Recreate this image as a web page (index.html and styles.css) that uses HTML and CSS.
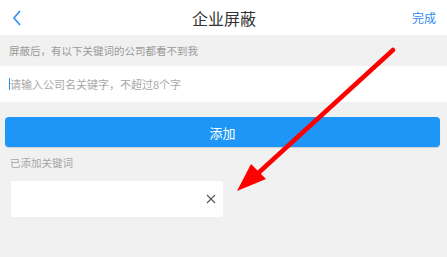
FILE: index.html
```html
<!DOCTYPE html>
<html lang="zh">
<head>
  <meta charset="UTF-8" />
  <meta name="viewport" content="width=device-width, initial-scale=1.0" />
  <title>企业屏蔽</title>
  <link rel="stylesheet" href="styles.css">
</head>
<body>
  <nav class="topbar">
    <a href="#" class="back">
      <svg width="10" height="16" viewBox="0 0 10 16"><path d="M8 1 L2 8 L8 15" fill="none" stroke="#2d8cf0" stroke-width="1.6"/></svg>
    </a>
    <h1 class="title">企业屏蔽</h1>
    <a href="#" class="done">完成</a>
  </nav>

  <p class="tip">屏蔽后，有以下关键词的公司都看不到我</p>

  <div class="input-row">
    <span class="caret"></span>
    <input type="text" class="keyword-input" placeholder="请输入公司名关键字，不超过8个字" />
  </div>

  <div class="btn-wrap">
    <button class="add-btn">添加</button>
  </div>

  <p class="section-label">已添加关键词</p>

  <div class="tags">
    <div class="tag">
      <span class="tag-text"></span>
      <svg class="tag-close" width="10" height="10" viewBox="0 0 10 10"><path d="M1 1 L9 9 M9 1 L1 9" stroke="#555" stroke-width="1.1"/></svg>
    </div>
  </div>

  <!-- annotation arrow over the page -->
  <svg class="arrow" width="447" height="257" viewBox="0 0 447 257">
    <line x1="393" y1="50" x2="255" y2="176" stroke="#ff0000" stroke-width="4.5" stroke-linecap="round"/>
    <polygon points="237,191 251,164 266,179" fill="#ff0000"/>
  </svg>
</body>
</html>
```

FILE: styles.css
```css
body {
  margin: 0;
  padding: 0;
  background-color: #f1f1f1;
  font-family: "Noto Sans CJK SC", "Noto Sans", sans-serif;
  width: 447px;
  height: 257px;
  position: relative;
  overflow: hidden;
}

.topbar {
  height: 35px;
  background-color: white;
  display: flex;
  align-items: center;
  justify-content: space-between;
  padding: 0 11px 0 12px;
}

.back {
  display: flex;
  align-items: center;
  width: 60px;
}

.title {
  margin: 0;
  font-size: 16px;
  font-weight: normal;
  color: #333;
}

.done {
  width: 60px;
  text-align: right;
  font-size: 12px;
  color: #2d8cf0;
  text-decoration: none;
}

.tip {
  margin: 0;
  height: 31px;
  line-height: 31px;
  padding-left: 9px;
  font-size: 10.5px;
  color: #9a9a9a;
}

.input-row {
  height: 36px;
  background-color: white;
  display: flex;
  align-items: center;
  padding-left: 9px;
}

.caret {
  width: 1px;
  height: 12px;
  background-color: #2d8cf0;
}

.keyword-input {
  border: none;
  outline: none;
  padding: 0;
  flex: 1;
  font-family: inherit;
  font-size: 11px;
  background: transparent;
}

.keyword-input::placeholder {
  color: #a8a8a8;
}

.btn-wrap {
  padding: 15px 7px 0 5px;
}

.add-btn {
  width: 100%;
  height: 30px;
  border: none;
  border-radius: 4px;
  background-color: #1e96f7;
  color: white;
  font-family: inherit;
  font-size: 13px;
  box-shadow: 0 1px 1px rgba(0, 0, 0, 0.15);
}

.section-label {
  margin: 0;
  padding: 7px 0 0 10px;
  height: 18px;
  line-height: 18px;
  font-size: 10.5px;
  color: #a5a5a5;
}

.tags {
  padding: 9px 0 0 11px;
}

.tag {
  width: 212px;
  height: 36px;
  background-color: white;
  border-radius: 2px;
  display: flex;
  align-items: center;
  justify-content: flex-end;
  box-sizing: border-box;
  padding-right: 7px;
}

.arrow {
  position: absolute;
  left: 0;
  top: 0;
  pointer-events: none;
}
```
